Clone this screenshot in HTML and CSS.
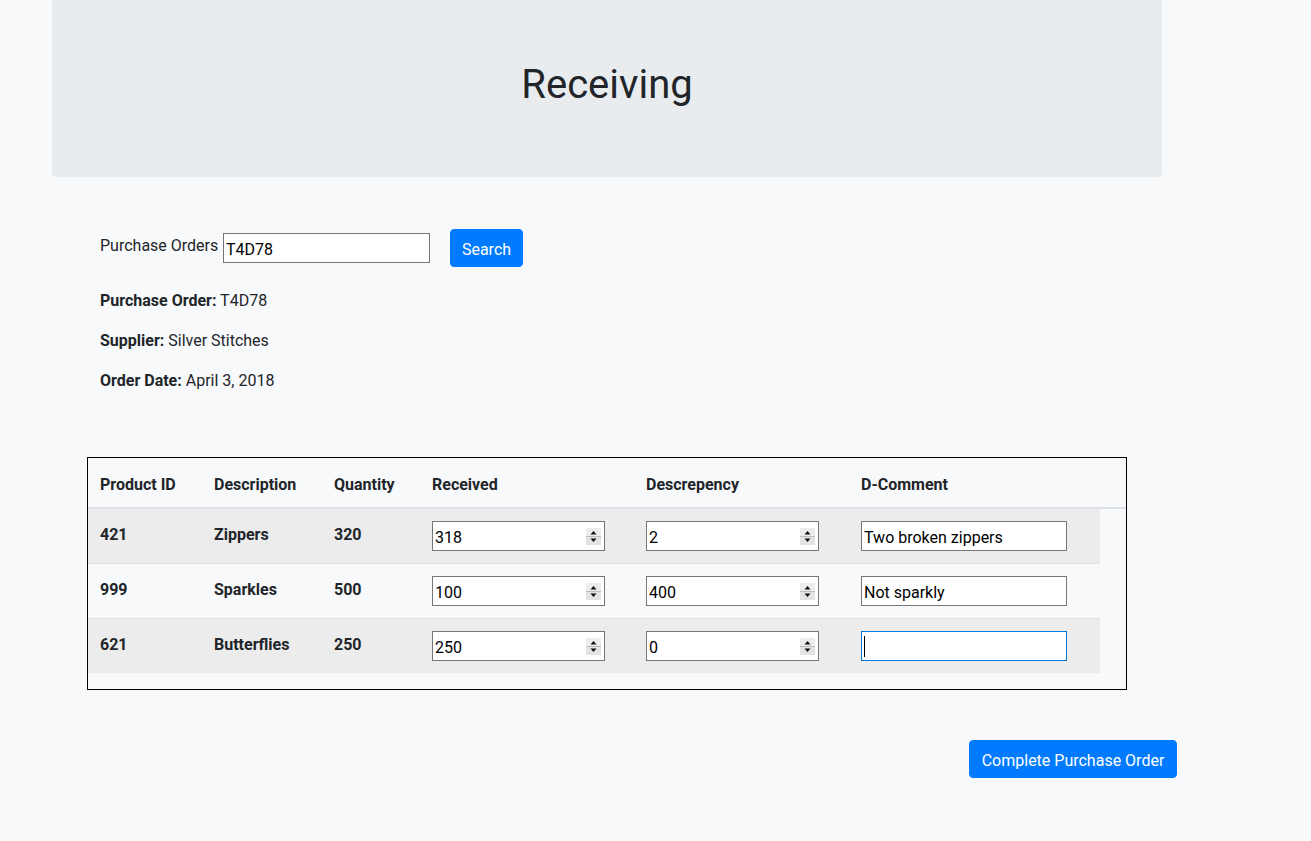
FILE: index.html
```html
<!DOCTYPE html>
<html lang="en">
<head>
<meta charset="utf-8">
<title>Receiving</title>
<link rel="stylesheet" href="styles.css">
</head>
<body class="page">
  <header class="jumbotron">
    <h1 class="title">Receiving</h1>
  </header>

  <section class="order">
    <form class="search-form">
      <label class="search-label" for="po">Purchase Orders</label>
      <span class="field field-search"><input id="po" class="field-input" type="text" value="T4D78"></span>
      <button class="btn btn-search" type="button">Search</button>
    </form>
    <p class="detail"><strong>Purchase Order:</strong> T4D78</p>
    <p class="detail"><strong>Supplier:</strong> Silver Stitches</p>
    <p class="detail"><strong>Order Date:</strong> April 3, 2018</p>
  </section>

  <div class="table-box">
    <table class="items">
      <colgroup>
        <col class="c-id"><col class="c-desc"><col class="c-qty"><col class="c-rec"><col class="c-dis"><col class="c-com"><col class="c-pad">
      </colgroup>
      <thead>
        <tr>
          <th>Product ID</th><th>Description</th><th>Quantity</th><th>Received</th><th>Descrepency</th><th>D-Comment</th><th></th>
        </tr>
      </thead>
      <tbody>
        <tr class="row-odd">
          <td class="cell-text">421</td><td class="cell-text">Zippers</td><td class="cell-text">320</td>
          <td><span class="field field-num"><input class="field-input" type="text" value="318"><svg class="spinner" width="15" height="17" viewBox="0 0 15 17"><rect x="0" y="0" width="15" height="17" fill="#e3e3e3"/><rect x="0" y="0" width="15" height="8" fill="#ececec"/><line x1="0" y1="8.5" x2="15" y2="8.5" stroke="#bdbdbd"/><polygon points="4.5,6.5 10.5,6.5 7.5,3" fill="#111"/><polygon points="4.5,10.5 10.5,10.5 7.5,14" fill="#111"/></svg></span></td>
          <td><span class="field field-num"><input class="field-input" type="text" value="2"><svg class="spinner" width="15" height="17" viewBox="0 0 15 17"><rect x="0" y="0" width="15" height="17" fill="#e3e3e3"/><rect x="0" y="0" width="15" height="8" fill="#ececec"/><line x1="0" y1="8.5" x2="15" y2="8.5" stroke="#bdbdbd"/><polygon points="4.5,6.5 10.5,6.5 7.5,3" fill="#111"/><polygon points="4.5,10.5 10.5,10.5 7.5,14" fill="#111"/></svg></span></td>
          <td><span class="field field-text"><input class="field-input" type="text" value="Two broken zippers"></span></td>
        </tr>
        <tr class="row-even">
          <td class="cell-text">999</td><td class="cell-text">Sparkles</td><td class="cell-text">500</td>
          <td><span class="field field-num"><input class="field-input" type="text" value="100"><svg class="spinner" width="15" height="17" viewBox="0 0 15 17"><rect x="0" y="0" width="15" height="17" fill="#e3e3e3"/><rect x="0" y="0" width="15" height="8" fill="#ececec"/><line x1="0" y1="8.5" x2="15" y2="8.5" stroke="#bdbdbd"/><polygon points="4.5,6.5 10.5,6.5 7.5,3" fill="#111"/><polygon points="4.5,10.5 10.5,10.5 7.5,14" fill="#111"/></svg></span></td>
          <td><span class="field field-num"><input class="field-input" type="text" value="400"><svg class="spinner" width="15" height="17" viewBox="0 0 15 17"><rect x="0" y="0" width="15" height="17" fill="#e3e3e3"/><rect x="0" y="0" width="15" height="8" fill="#ececec"/><line x1="0" y1="8.5" x2="15" y2="8.5" stroke="#bdbdbd"/><polygon points="4.5,6.5 10.5,6.5 7.5,3" fill="#111"/><polygon points="4.5,10.5 10.5,10.5 7.5,14" fill="#111"/></svg></span></td>
          <td><span class="field field-text"><input class="field-input" type="text" value="Not sparkly"></span></td>
        </tr>
        <tr class="row-odd">
          <td class="cell-text">621</td><td class="cell-text">Butterflies</td><td class="cell-text">250</td>
          <td><span class="field field-num"><input class="field-input" type="text" value="250"><svg class="spinner" width="15" height="17" viewBox="0 0 15 17"><rect x="0" y="0" width="15" height="17" fill="#e3e3e3"/><rect x="0" y="0" width="15" height="8" fill="#ececec"/><line x1="0" y1="8.5" x2="15" y2="8.5" stroke="#bdbdbd"/><polygon points="4.5,6.5 10.5,6.5 7.5,3" fill="#111"/><polygon points="4.5,10.5 10.5,10.5 7.5,14" fill="#111"/></svg></span></td>
          <td><span class="field field-num"><input class="field-input" type="text" value="0"><svg class="spinner" width="15" height="17" viewBox="0 0 15 17"><rect x="0" y="0" width="15" height="17" fill="#e3e3e3"/><rect x="0" y="0" width="15" height="8" fill="#ececec"/><line x1="0" y1="8.5" x2="15" y2="8.5" stroke="#bdbdbd"/><polygon points="4.5,6.5 10.5,6.5 7.5,3" fill="#111"/><polygon points="4.5,10.5 10.5,10.5 7.5,14" fill="#111"/></svg></span></td>
          <td><span class="field field-text field-focus"><span class="caret"></span><input class="field-input" type="text" value=""></span></td>
        </tr>
      </tbody>
    </table>
  </div>

  <div class="actions">
    <button class="btn btn-complete" type="button">Complete Purchase Order</button>
  </div>
</body>
</html>
```

FILE: styles.css
```css
* { box-sizing: border-box; }

html, body { margin: 0; padding: 0; }

.page {
  background: #f8f9fa;
  color: #212529;
  font-family: Roboto, "Liberation Sans", Arial, sans-serif;
  font-size: 16px;
  line-height: 24px;
  min-height: 841px;
}

.jumbotron {
  margin-left: 52px;
  width: 1110px;
  height: 177px;
  background: #e9ecef;
  border-radius: 0 0 4px 4px;
  padding-top: 61px;
}

.title {
  margin: 0;
  font-size: 40px;
  font-weight: 400;
  line-height: 48px;
  text-align: center;
}

.order {
  padding-left: 100px;
  padding-top: 52px;
}

.search-form {
  display: flex;
  align-items: flex-start;
  margin: 0 0 21px 0;
}

.search-label {
  width: 123px;
  margin-top: 5px;
  flex: none;
}

.field {
  display: flex;
  align-items: center;
  height: 30px;
  background: #fff;
  border: 1px solid #767676;
  flex: none;
}

.field-input {
  flex: 1;
  min-width: 0;
  height: 100%;
  border: 0;
  outline: none;
  background: transparent;
  padding: 2px 2px 0;
  font: inherit;
  font-size: 16px;
  font-weight: 400;
  color: #000;
}

.field-search { width: 207px; margin-top: 4px; }
.field-num { width: 173px; }
.field-text { width: 206px; }
.field-focus { border-color: #0078d7; }

.spinner {
  flex: none;
  margin-right: 3px;
  display: block;
}

.caret {
  flex: none;
  width: 1px;
  height: 21px;
  margin-left: 2px;
  background: #000;
}

.field-focus .field-input { caret-color: transparent; }

.btn {
  font: inherit;
  font-size: 16px;
  line-height: 24px;
  color: #fff;
  background: #007bff;
  border: 1px solid #007bff;
  border-radius: 4px;
  padding: 8px 12px 4px;
  cursor: pointer;
}

.btn-search { margin-left: 20px; width: 73px; padding-left: 0; padding-right: 0; }

.detail {
  margin: 0 0 15px 0;
  padding-top: 1px;
}

.table-box {
  margin: 64px 0 0 87px;
  width: 1040px;
  border: 1px solid #000;
}

.items {
  width: 100%;
  table-layout: fixed;
  border-collapse: separate;
  border-spacing: 0;
  margin-bottom: 16px;
}

.c-id { width: 114px; }
.c-desc { width: 120px; }
.c-qty { width: 98px; }
.c-rec { width: 214px; }
.c-dis { width: 215px; }
.c-com { width: 251px; }
.c-pad { width: 26px; }

.items th {
  text-align: left;
  font-weight: 700;
  padding: 15px 12px 10px;
  border-bottom: 2px solid #dee2e6;
  vertical-align: bottom;
}

.items td {
  font-weight: 700;
  padding: 12px;
  vertical-align: top;
}

.items .cell-text { line-height: 28px; }

.items tbody tr + tr td { border-top: 1px solid #dee2e6; }

.row-odd td { background: #ececed; }

.actions {
  width: 1177px;
  display: flex;
  justify-content: flex-end;
  margin-top: 50px;
}

.btn-complete { width: 208px; padding-left: 0; padding-right: 0; }
```
